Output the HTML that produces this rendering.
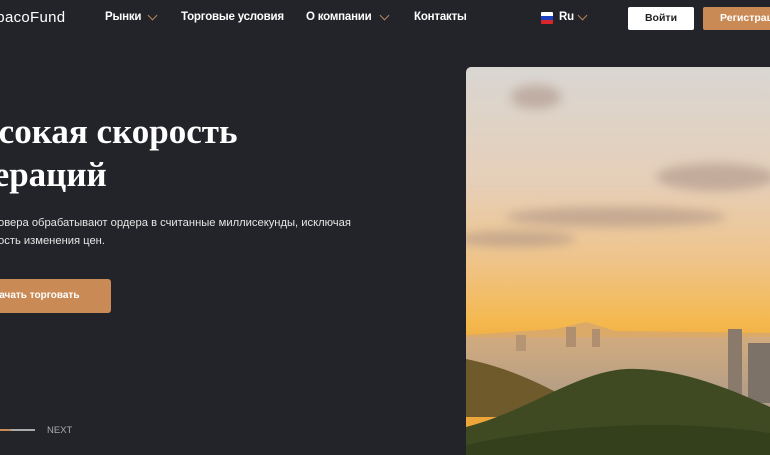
<!DOCTYPE html>
<html><head><meta charset="utf-8"><style>
*{margin:0;padding:0;box-sizing:border-box}
body{width:770px;height:455px;overflow:hidden;background:#222429;font-family:"Liberation Sans",sans-serif;color:#fff;position:relative}
.a{position:absolute;white-space:nowrap}
.nav{font-size:11.5px;font-weight:bold;top:11px;letter-spacing:-0.2px}
.chev{position:absolute;width:7px;height:7px;border-right:1.3px solid #b9855a;border-bottom:1.3px solid #b9855a;transform:rotate(45deg)}
h1{position:absolute;font-family:"Liberation Serif",serif;font-weight:bold;font-size:35px;line-height:43px;white-space:nowrap}
</style></head><body>
<div class="a" style="left:-14px;top:9px;font-size:15px;letter-spacing:0.3px">AbacoFund</div>
<div class="a nav" style="left:105px">Рынки</div><div class="chev" style="left:149px;top:12px"></div>
<div class="a nav" style="left:181px">Торговые условия</div>
<div class="a nav" style="left:306px">О компании</div><div class="chev" style="left:381px;top:12px"></div>
<div class="a nav" style="left:414px">Контакты</div>
<div class="a" style="left:541px;top:12px;width:12px;height:12px;overflow:hidden;border-radius:1px">
<div style="height:4px;background:#fff"></div><div style="height:4px;background:#1c3fbf"></div><div style="height:4px;background:#d8262c"></div></div>
<div class="a nav" style="left:559px">Ru</div><div class="chev" style="left:579px;top:12px"></div>
<div class="a" style="left:628px;top:7px;width:66px;height:23px;background:#fff;border-radius:2px;color:#222;font-size:10.5px;font-weight:bold;text-align:center;line-height:23px">Войти</div>
<div class="a" style="left:703px;top:7px;width:90px;height:23px;background:#c98a55;border-radius:2px;font-size:10.5px;font-weight:bold;line-height:23px;padding-left:17px">Регистрация</div>

<h1 style="left:-52px;top:110px">Высокая скорость</h1>
<h1 style="left:-44px;top:153px">операций</h1>
<div class="a" style="left:-2px;top:214px;font-size:11.2px;color:#e6e6e6;line-height:18px">овера обрабатывают ордера в считанные миллисекунды, исключая<br>ость изменения цен.</div>
<div class="a" style="left:-20px;top:279px;width:131px;height:34px;background:#c98a55;border-radius:3px;font-size:10px;font-weight:bold;line-height:34px;padding-left:12px">Начать торговать</div>
<div class="a" style="left:0;top:429px;width:11px;height:2px;background:#c98a55"></div>
<div class="a" style="left:11px;top:429px;width:24px;height:2px;background:#aaa"></div>
<div class="a" style="left:47px;top:425px;font-size:9.5px;color:#aaa">NEXT</div>

<svg class="a" style="left:466px;top:67px;border-radius:5px 0 0 0" width="304" height="388" viewBox="0 0 304 388">
<defs>
<linearGradient id="sky" x1="0" y1="0" x2="0" y2="1">
<stop offset="0" stop-color="#d9d6d2"/><stop offset="0.3" stop-color="#e6cfb8"/><stop offset="0.5" stop-color="#efc48a"/><stop offset="0.66" stop-color="#f4b84e"/><stop offset="0.75" stop-color="#eea63a"/></linearGradient>
<linearGradient id="city" x1="0" y1="0" x2="0" y2="1"><stop offset="0" stop-color="#d2ab7e"/><stop offset="1" stop-color="#a8998a"/></linearGradient>
<filter id="b"><feGaussianBlur stdDeviation="5"/></filter>
</defs>
<rect width="304" height="388" fill="url(#sky)"/>
<g filter="url(#b)" fill="#a88f83" opacity="0.55">
<ellipse cx="150" cy="150" rx="110" ry="10"/><ellipse cx="50" cy="172" rx="60" ry="8"/>
<ellipse cx="250" cy="110" rx="60" ry="14"/><ellipse cx="70" cy="30" rx="25" ry="12"/>
</g>
<path d="M0 268 L90 262 L120 255 L150 264 L304 266 L304 320 L0 320Z" fill="#dcaa68"/>
<rect x="0" y="270" width="304" height="80" fill="url(#city)"/>
<rect x="262" y="262" width="14" height="70" fill="#8a7a6c"/><rect x="282" y="276" width="22" height="60" fill="#7d7268"/>
<rect x="100" y="260" width="10" height="20" fill="#b08f70"/><rect x="126" y="262" width="8" height="18" fill="#b08f70"/>
<rect x="50" y="268" width="10" height="16" fill="#b59574"/>
<path d="M0 292 C40 300 70 315 90 325 L90 350 L0 350Z" fill="#6f5a2c"/>
<path d="M0 360 C60 345 110 305 160 302 C210 300 260 320 304 340 L304 388 L0 388Z" fill="#3f4a22"/>
<path d="M0 378 C80 360 200 350 304 366 L304 388 L0 388Z" fill="#34401c"/>
</svg>
</body></html>
